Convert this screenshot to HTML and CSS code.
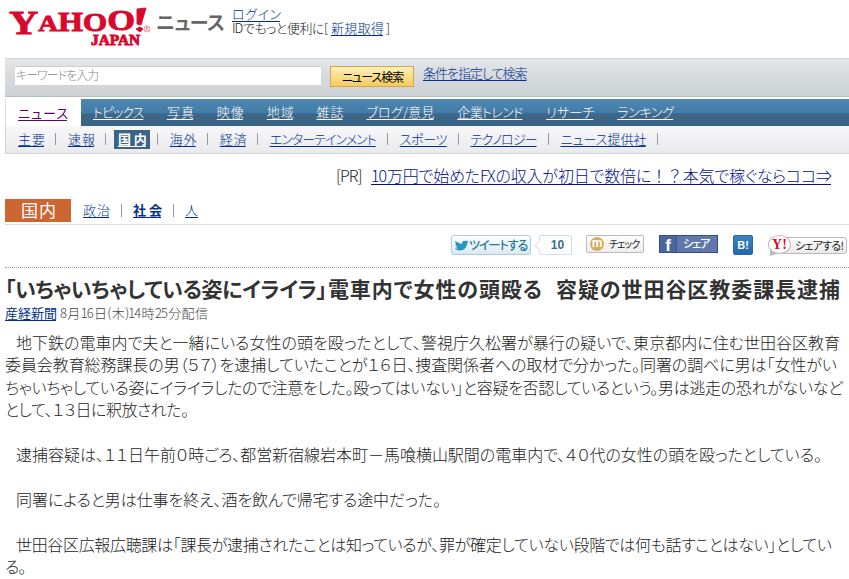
FILE: index.html
```html
<!DOCTYPE html>
<html lang="ja">
<head>
<meta charset="utf-8">
<title>Yahoo!ニュース - 国内</title>
<link rel="stylesheet" href="styles.css">
</head>
<body>
<header class="masthead">
  <svg class="logo" width="150" height="50" viewBox="0 0 150 50" role="img" aria-label="Yahoo! JAPAN">
    <g class="logo-face">
      <text x="4" y="32" textLength="126" lengthAdjust="spacingAndGlyphs"><tspan font-size="34" dy="2">Y</tspan><tspan font-size="23" dy="-3">A</tspan><tspan font-size="27">H</tspan><tspan font-size="26">O</tspan><tspan font-size="30" dy="-1">O</tspan></text>
      <path d="M132 9l9-1-5 17-4-1zM131 29l4-2 3 2-3 3z"/>
      <text x="86" y="45" font-size="15" textLength="49" lengthAdjust="spacingAndGlyphs">JAPAN</text>
    </g>
    <g class="reg"><circle cx="142" cy="29" r="3"/><path d="M141 31v-4h1.500q1 1 0 2h-1.500m1.500 0l1 2"/></g>
  </svg>
  <span class="service fit">ニュース</span>
  <div class="account">
    <a class="fit login" href="#">ログイン</a>
    <div class="signup"><span class="fit lead">IDでもっと便利に[</span><a class="fit" href="#">新規取得</a><span>]</span></div>
  </div>
</header>

<form class="search">
  <span class="field"><span class="fit">キーワードを入力</span></span>
  <button type="button"><span class="fit">ニュース検索</span></button>
  <a class="fit" href="#">条件を指定して検索</a>
</form>

<nav class="tabs">
  <div class="current"><a class="fit" href="#">ニュース</a></div>
  <div class="tab-list">
    <a class="fit" href="#">トピックス</a><a class="fit" href="#">写真</a><a class="fit" href="#">映像</a><a class="fit" href="#">地域</a><a class="fit" href="#">雑誌</a><a class="fit" href="#">ブログ/意見</a><a class="fit" href="#">企業トレンド</a><a class="fit" href="#">リサーチ</a><a class="fit" href="#">ランキング</a>
  </div>
</nav>
<nav class="subnav">
  <a class="fit" href="#">主要</a><i></i><a class="fit" href="#">速報</a><i></i><a class="fit here" href="#">国内</a><i></i><a class="fit" href="#">海外</a><i></i><a class="fit" href="#">経済</a><i></i><a class="fit" href="#">エンターテインメント</a><i></i><a class="fit" href="#">スポーツ</a><i></i><a class="fit" href="#">テクノロジー</a><i></i><a class="fit" href="#">ニュース提供社</a><i></i>
</nav>

<div class="pr"><span class="fit tag">[PR]</span><a class="fit" href="#">10万円で始めたFXの収入が初日で数倍に<span class="wide">！？</span>本気で稼ぐならココ⇒</a></div>

<nav class="category">
  <span class="badge"><span class="fit">国内</span></span>
  <a class="fit" href="#">政治</a><i></i><a class="fit strong" href="#">社会</a><i></i><a href="#">人</a>
</nav>

<div class="share">
  <span class="tweet"><svg width="15" height="13" viewBox="0 0 15 13"><path fill="#2795c6" d="M1 2l4 2 3 1c0-3 2-4 4-3l2-1-1 2 1.500 0-1.500 1.500c0 4-3 7-7 7-3 0-4-1-5-2h3L1.500 8h2L1 6h1z"/></svg><span class="fit">ツイートする</span></span>
  <span class="count">10</span>
  <span class="check"><b>m</b><span class="fit">チェック</span></span>
  <span class="facebook"><b>f</b><span class="fit">シェア</span></span>
  <span class="hatena">B!</span>
  <span class="yshare"><b>Y!</b><span class="fit">シェアする!</span></span>
</div>

<article>
  <h1><span class="fit t0">「いちゃいちゃしている姿にイライラ」</span><span class="fit t1">電車内で女性の頭殴る</span><span class="fit t2">容疑の世田谷区教委課長逮捕</span></h1>
  <div class="source"><a class="fit" href="#">産経新聞</a><span class="fit">8月16日(木)14時25分配信</span></div>
  <p>
    <span class="fit line l1">地下鉄の電車内で夫と一緒にいる女性の頭を殴ったとして、警視庁久松署が暴行の疑いで、東京都内に住む世田谷区教育</span>
    <span class="fit line l2">委員会教育総務課長の男（５７）を逮捕していたことが１６日、捜査関係者への取材で分かった。同署の調べに男は「女性がい</span>
    <span class="fit line l3">ちゃいちゃしている姿にイライラしたので注意をした。殴ってはいない」と容疑を否認しているという。男は逃走の恐れがないなど</span>
    <span class="fit line l4">として、１３日に釈放された。</span>
  </p>
  <p><span class="fit line l5">逮捕容疑は、１１日午前０時ごろ、都営新宿線岩本町－馬喰横山駅間の電車内で、４０代の女性の頭を殴ったとしている。</span></p>
  <p><span class="fit line l6">同署によると男は仕事を終え、酒を飲んで帰宅する途中だった。</span></p>
  <p>
    <span class="fit line l7">世田谷区広報広聴課は「課長が逮捕されたことは知っているが、罪が確定していない段階では何も話すことはない」としてい</span>
    <span class="fit line l8">る。</span>
  </p>
</article>
</body>
</html>
```
FILE: styles.css
```css
* { box-sizing: border-box; }
body {
  margin: 0;
  width: 849px;
  height: 579px;
  overflow: hidden;
  background: #fff;
  color: #222;
  font: 300 13px/16px "Noto Sans CJK JP", sans-serif;
  font-feature-settings: "palt";
}
a { color: #00308f; text-decoration: underline; text-decoration-thickness: 1px; text-underline-offset: 2px; text-decoration-skip-ink: none; }

/* Text spread evenly over the width of its box */
.fit { display: block; white-space: nowrap; text-align: justify; text-align-last: justify; letter-spacing: -1px; }

.masthead { display: flex; height: 58px; padding-left: 5px; }
.logo { display: block; flex: none; font-family: "Liberation Serif", serif; font-weight: 700; }
.logo-face { fill: #d9082d; stroke: #d9082d; stroke-width: .9; }
.reg { fill: none; stroke: #e8506a; stroke-width: .6; }
.service { width: 68px; margin: 11px 0 0 1px; font-size: 19px; line-height: 22px; font-weight: 700; color: #666; }
.account { margin: 7px 0 0 8px; }
.login { width: 48px; line-height: 14px; }
.signup { display: flex; height: 14px; line-height: 13px; }
.signup .lead { width: 95px; }
.signup a { width: 52px; margin: 0 3px 0 4px; }

.search { display: flex; height: 39px; margin: 0 0 2px 5px; padding: 7px 0 0 10px; border: solid; border-width: 1px 0; border-color: #ccd0d8 transparent #b1c0c3 #ccc; background: linear-gradient(#e5e7e9, #d5d9db 55%, #cdd2d4); }
.field { width: 306px; height: 19px; padding: 0 1px; background: #fff; border-top: 1px solid #ccc; font-size: 12px; color: #888; }
.field .fit { width: 82px; }
.search button { width: 84px; height: 21px; margin-left: 9px; padding: 0 11px; border: 1px solid #d9a648; background: linear-gradient(#fff0bd, #f9dc83 55%, #f3cc62); color: #000; font: inherit; font-weight: 400; font-size: 12px; font-feature-settings: inherit; line-height: 18px; }
.search button .fit { width: 60px; }
.search a { width: 101px; margin: -1px 0 0 9px; }

.tabs { display: flex; height: 27px; margin-left: 5px; background: linear-gradient(#4e88b3, #427ba5 53%, #3b678b 54%, #3c6483); }
.current { width: 76px; padding: 6px 13px 0; background: #fff; border-left: 1px solid #ddd; }
.current a { width: 49px; margin-left: -1px; color: #606; font-weight: 400; }
.tab-list { display: grid; grid-template-columns: 50px 26px 26px 26px 26px 67px 65px 47px 56px; column-gap: 23.9px; padding: 5px 0 0 12px; }
.tab-list a { color: #fff; }
.subnav { display: grid; grid-template-columns: 26px 1px 26px 1px 28px 1px 26px 1px 26px 1px 106px 1px 47px 1px 66px 1px 85px 1px; column-gap: 11.470px; height: 28px; margin-left: 5px; padding: 5px 0 0 12px; border: solid #d4d4d4; border-width: 0 0 1px 1px; background: linear-gradient(#f8f8fa, #eaeaec); }
.subnav i, .category i { width: 1px; height: 12px; margin-top: 2px; background: #999; }
.subnav .here { width: 36px; height: 19px; margin: -1px -4px 0; padding: 1px 4px; color: #fff; background: #3c6384; font-weight: 700; }

.pr { display: flex; height: 45px; padding: 11px 0 0 336px; font-size: 16px; line-height: 20px; }
.pr .tag { width: 28px; margin-right: 7px; }
.pr a { width: 460px; color: #00108c; }
.wide { font-feature-settings: normal; }

.category { display: flex; height: 26px; margin-left: 5px; border-bottom: 1px solid #ddd; line-height: 22px; }
.badge { width: 66px; height: 23px; margin-right: 12px; padding: 0 16px; background: #cc6632; color: #fff; font-size: 17px; line-height: 22px; font-weight: 400; }
.category > a.fit { width: 26px; }
.category > a.strong { width: 28px; font-weight: 700; }
.category i { margin: 5px 11.500px 0; height: 13px; }

.share { display: flex; height: 43px; margin-left: 5px; padding: 10px 0 0 446px; border-bottom: 1px dotted #999; }
.tweet { display: flex; width: 80px; height: 20px; padding: 1px 3px; border: 1px solid #b4cbd9; border-radius: 3px; background: linear-gradient(#fff, #d9e9f2); color: #287899; font-size: 12px; font-weight: 500; }
.tweet svg { flex: none; margin: 2px 0 0 -1px; }
.tweet .fit { width: 57px; }
.count { position: relative; width: 33px; height: 20px; margin-left: 8px; padding-left: 4px; border: 1px solid #cce0ea; border-radius: 2px; color: #376f83; font: 700 12px/18px "Liberation Sans", sans-serif; text-align: center; }
.count::before { content: ""; position: absolute; left: -4px; top: 6px; width: 6px; height: 6px; border: solid #cce0ea; border-width: 0 0 1px 1px; background: #fff; transform: rotate(45deg); }
.check { display: flex; width: 58px; height: 18px; margin-left: 14px; padding: 1px 4px 0 3px; border: 1px solid #bbb; border-radius: 2px; background: linear-gradient(#fff, #eee); font-size: 10px; line-height: 14px; font-weight: 400; }
.check b { width: 14px; height: 14px; margin-right: 5px; border-radius: 50%; background: #d6ae59; color: #fff; font: 700 12px/12px "Liberation Sans", sans-serif; text-align: center; }
.check .fit { width: 29px; }
.facebook { display: flex; width: 59px; height: 18px; margin-left: 15px; border: 1px solid #354f85; background: #6078ab; color: #fff; font-size: 11px; line-height: 15px; font-weight: 500; }
.facebook b { width: 17px; margin-right: 6px; border-right: 1px solid #415b92; background: #4b659d; font: 700 17px/19px "Liberation Sans", sans-serif; text-align: center; }
.facebook .fit { width: 26px; }
.hatena { width: 20px; height: 20px; margin-left: 15px; border: 1px solid #2868a4; border-radius: 2px; background: linear-gradient(#3b82c4, #2467ac); color: #fff; font: 700 11px/18px "Liberation Sans", sans-serif; text-align: center; }
.yshare { position: relative; width: 76px; height: 17px; margin: 2px 0 0 18px; padding-left: 23px; border: 1px solid #bbb; border-radius: 3px; background: linear-gradient(#fff, #e9e9e9); color: #222; font-size: 11px; line-height: 15px; font-weight: 400; }
.yshare .fit { width: 48px; }
.yshare b { position: absolute; left: -4px; top: -3px; width: 23px; height: 19px; border: 1px solid #bbb; border-radius: 50%; background: #fff; color: #d9082d; font: 700 14px/17px "Liberation Serif", serif; text-align: center; }
.yshare b::after { content: ""; position: absolute; left: 1px; top: 14px; width: 6px; height: 6px; background: #bbb; clip-path: polygon(0 100%, 0 0, 100% 70%); }

article { padding-left: 5px; }
h1 { display: flex; margin: 0; height: 36px; padding-top: 6px; font-size: 21px; line-height: 28px; font-weight: 700; color: #333; }
h1 .t0 { width: 321px; }
h1 .t1 { width: 213px; margin-left: 2px; }
h1 .t2 { width: 283px; margin-left: 15px; }
.source { display: flex; height: 27px; padding-top: 1px; color: #444; }
.source a { width: 51px; margin-right: 4px; font-weight: 400; }
.source span { width: 147px; }
p { margin: 0 0 22.400px; font-size: 16px; line-height: 22.400px; }
.line { height: 22.400px; }
.l1 { width: 823px; margin-left: 11px; }
.l2 { width: 831px; }
.l3 { width: 837px; }
.l4 { width: 183px; }
.l5 { width: 805px; margin-left: 11px; }
.l6 { width: 424px; margin-left: 11px; }
.l7 { width: 815px; margin-left: 11px; }
.l8 { width: 20px; }
```
